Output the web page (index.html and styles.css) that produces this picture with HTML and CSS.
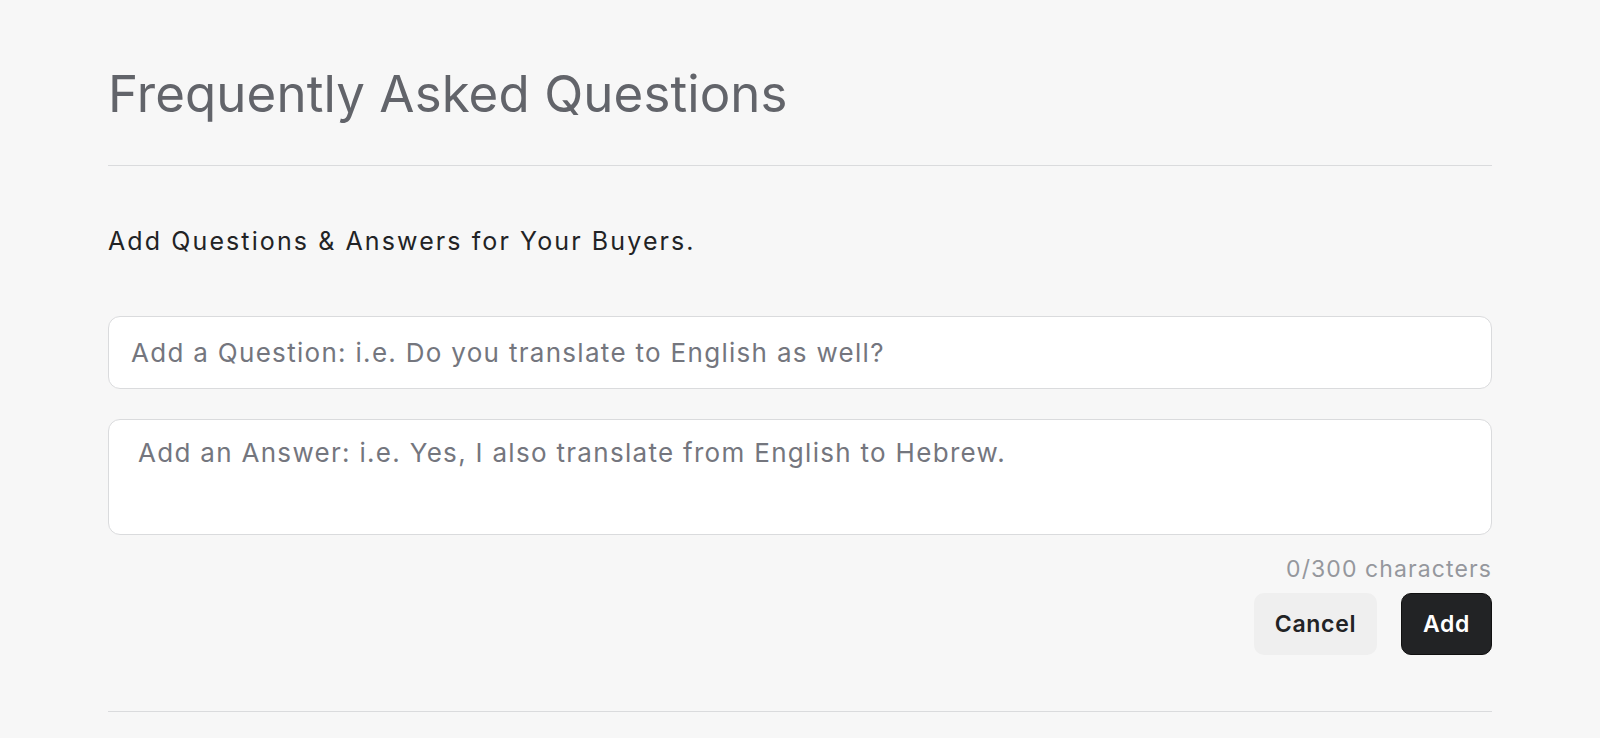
FILE: index.html
```html
<!DOCTYPE html>
<html lang="en">
<head>
<meta charset="utf-8">
<title>Frequently Asked Questions</title>
<link rel="stylesheet" href="styles.css">
</head>
<body>
<main class="faq">
  <h1 class="faq-title">Frequently Asked Questions</h1>
  <hr class="divider">
  <p class="faq-subtitle">Add Questions &amp; Answers for Your Buyers.</p>
  <form class="faq-form">
    <input class="field field-question" type="text" placeholder="Add a Question: i.e. Do you translate to English as well?">
    <textarea class="field field-answer" placeholder="Add an Answer: i.e. Yes, I also translate from English to Hebrew."></textarea>
    <div class="counter">0/300 characters</div>
    <div class="actions">
      <button type="button" class="btn btn-cancel">Cancel</button>
      <button type="button" class="btn btn-add">Add</button>
    </div>
  </form>
  <hr class="divider divider-bottom">
</main>
</body>
</html>
```

FILE: styles.css
```css
* { box-sizing: border-box; }

html, body {
  margin: 0;
  padding: 0;
  background: #f7f7f7;
}

body {
  font-family: Inter, "Noto Sans", "Liberation Sans", sans-serif;
  color: #222325;
}

.faq {
  padding: 63px 108px 0;
  display: flex;
  flex-direction: column;
}

.faq-title {
  margin: 0;
  font-size: 51px;
  line-height: 1.2;
  font-weight: 400;
  color: #62646a;
  letter-spacing: 0.1px;
}

.divider {
  margin: 41px 0 0;
  border: 0;
  height: 1px;
  background: #dadbdd;
}

.faq-subtitle {
  margin: 58px 0 0;
  font-size: 25px;
  line-height: 1.4;
  font-weight: 400;
  letter-spacing: 2.1px;
  color: #222325;
}

.faq-form {
  margin-top: 57px;
  display: flex;
  flex-direction: column;
}

.field {
  display: block;
  width: 100%;
  border: 1px solid #dadbdd;
  border-radius: 12px;
  background: #fff;
  font-family: inherit;
  font-size: 26px;
  letter-spacing: 1.3px;
  color: #222325;
  outline: none;
}

.field::placeholder {
  color: #74767e;
  opacity: 1;
}

.field-question {
  height: 73px;
  padding: 0 22px;
}

.field-answer {
  margin-top: 30px;
  height: 116px;
  padding: 15px 29px;
  line-height: 1.4;
  resize: none;
}

.counter {
  margin-top: 18px;
  align-self: flex-end;
  font-size: 23px;
  line-height: 1.4;
  letter-spacing: 1.1px;
  color: #95979d;
}

.actions {
  margin-top: 8px;
  display: flex;
  justify-content: flex-end;
  gap: 24px;
}

.btn {
  height: 62px;
  padding: 0;
  border-radius: 10px;
  font-family: inherit;
  font-size: 23px;
  font-weight: 600;
  letter-spacing: 0.7px;
  cursor: pointer;
}

.btn-cancel {
  width: 123px;
  background: #efefef;
  border: 0;
  color: #222325;
}

.btn-add {
  width: 91px;
  background: #222325;
  border: 1px solid #111;
  color: #fff;
}

.divider-bottom {
  margin-top: 56px;
}
```
